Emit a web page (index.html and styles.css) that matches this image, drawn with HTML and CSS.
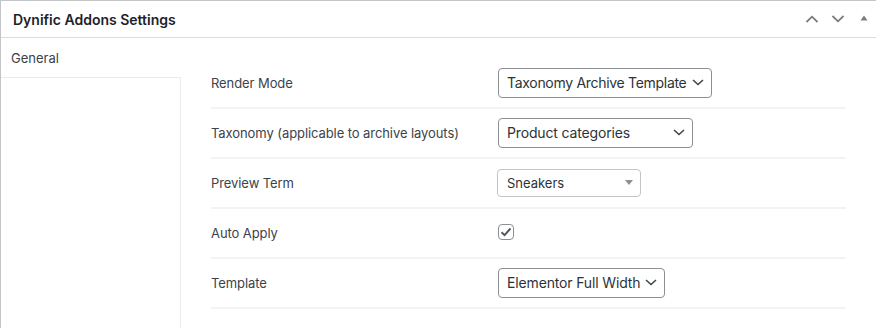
FILE: index.html
```html
<!doctype html>
<html>
<head>
<meta charset="utf-8">
<title>Dynific Addons Settings</title>
<link rel="stylesheet" href="styles.css">
</head>
<body>
<div class="postbox">
	<div class="postbox-header">
		<h2 class="hndle">Dynific Addons Settings</h2>
		<div class="handle-actions">
			<svg class="h-icon" width="14" height="8" viewBox="0 0 14 8"><path d="M1.5 7L7 1.7L12.5 7" fill="none" stroke="#787c82" stroke-width="1.8"/></svg>
			<svg class="h-icon" width="14" height="8" viewBox="0 0 14 8"><path d="M1.5 1L7 6.3L12.5 1" fill="none" stroke="#787c82" stroke-width="1.8"/></svg>
			<svg class="h-tri" width="8" height="6" viewBox="0 0 8 6"><path d="M0.5 5.5L4 0.5L7.5 5.5Z" fill="#787c82"/></svg>
		</div>
	</div>
	<div class="inside">
		<ul class="tabs">
			<li class="tab active">General</li>
			<li class="tabs-rest"></li>
		</ul>
		<div class="panel">
			<div class="row">
				<div class="label">Render Mode</div>
				<div class="field">
					<div class="select w1"><span>Taxonomy Archive Template</span><svg width="12" height="7" viewBox="0 0 12 7"><path d="M1 1L6 5.6L11 1" fill="none" stroke="#3c434a" stroke-width="1.5"/></svg></div>
				</div>
			</div>
			<div class="row">
				<div class="label">Taxonomy (applicable to archive layouts)</div>
				<div class="field">
					<div class="select w2"><span>Product categories</span><svg width="12" height="7" viewBox="0 0 12 7"><path d="M1 1L6 5.6L11 1" fill="none" stroke="#3c434a" stroke-width="1.5"/></svg></div>
				</div>
			</div>
			<div class="row">
				<div class="label">Preview Term</div>
				<div class="field">
					<div class="select select-alt"><span>Sneakers</span><svg width="8" height="5" viewBox="0 0 8 5"><path d="M0 0H8L4 5Z" fill="#8c8f94"/></svg></div>
				</div>
			</div>
			<div class="row">
				<div class="label">Auto Apply</div>
				<div class="field">
					<span class="checkbox"><svg width="12" height="10" viewBox="0 0 12 10"><path d="M1.5 5.2L4.6 8.2L10.5 1.5" fill="none" stroke="#50575e" stroke-width="1.9"/></svg></span>
				</div>
			</div>
			<div class="row">
				<div class="label">Template</div>
				<div class="field">
					<div class="select w3"><span>Elementor Full Width</span><svg width="12" height="7" viewBox="0 0 12 7"><path d="M1 1L6 5.6L11 1" fill="none" stroke="#3c434a" stroke-width="1.5"/></svg></div>
				</div>
			</div>
		</div>
	</div>
</div>
</body>
</html>
```

FILE: styles.css
```css
*{margin:0;padding:0;list-style:none;box-sizing:border-box;}
body{ background:#fff; font-family:Inter, "Noto Sans", "Liberation Sans", sans-serif; color:#3c434a; }
.postbox{ border-top:1px solid #c3c4c7; border-left:1px solid #c3c4c7; width:900px; height:340px; display:flex; flex-direction:column; }
.postbox-header{ height:37px; border-bottom:1px solid #dcdcde; display:flex; align-items:center; justify-content:space-between; padding:0 0 0 12px; }
.hndle{ font-size:14px; font-weight:600; color:#1d2327; }
.handle-actions{ display:flex; align-items:center; width:95px; gap:12px; padding-bottom:1px; }
.h-tri{ margin-left:3px; margin-top:-2px; }
.inside{ display:flex; flex:1; }
.tabs{ width:180px; display:flex; flex-direction:column; }
.tab{ height:39px; font-size:13px; color:#3c434a; padding:1px 0 0 10px; display:flex; align-items:center; }
.tabs-rest{ flex:1; border-top:1px solid #ebebeb; border-right:1px solid #ebebeb; }
.panel{ padding:21px 0 0 30px; width:665px; }
.row{ height:50px; border-bottom:2px solid #f3f3f3; display:flex; align-items:center; padding-bottom:1px; }
.label{ width:287px; font-size:13px; color:#3c434a; letter-spacing:-0.08px; white-space:nowrap; }
.field{ display:flex; align-items:center; }
.select{ height:30px; border:1px solid #8c8f94; border-radius:4px; display:flex; align-items:center; justify-content:space-between; gap:4px; padding:0 7px 0 8px; font-size:14px; color:#2c3338; letter-spacing:-0.15px; white-space:nowrap; }
.select svg{ flex-shrink:0; }
.w1{ width:214px; letter-spacing:-0.3px; }
.w2{ width:195px; }
.w3{ width:167px; }
.select-alt{ width:144px; height:28px; border-color:#c3c4c7; font-size:13px; padding:0 7px 0 9px; margin-left:-1px; letter-spacing:0; }
.checkbox{ width:16px; height:16px; border:1px solid #8c8f94; border-radius:4px; display:flex; align-items:center; justify-content:center; margin-top:-1px; }
```
